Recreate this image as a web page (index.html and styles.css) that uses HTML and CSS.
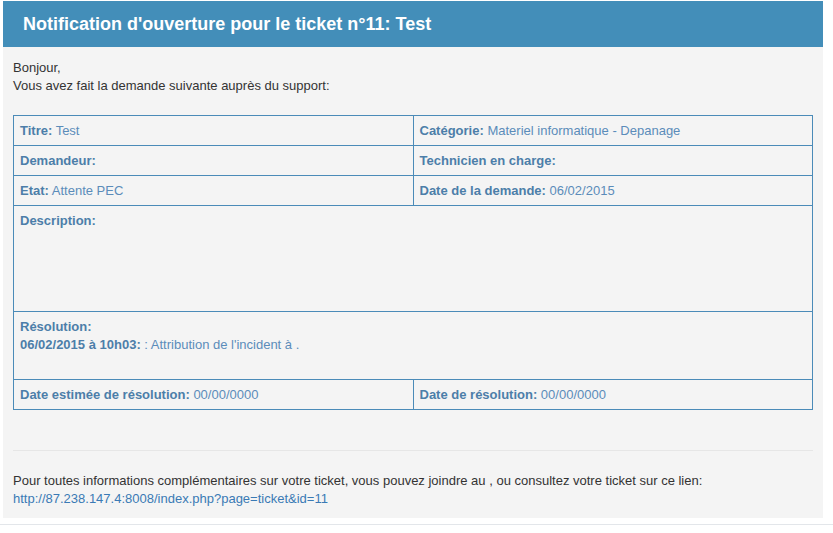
FILE: index.html
```html
<!DOCTYPE html>
<html lang="fr">
<head>
    <meta charset="UTF-8">
    <title>Notification d'ouverture pour le ticket n°11</title>
    <link rel="stylesheet" href="styles.css">
</head>
<body>
    <div class="mail">
        <div class="mail-head">Notification d'ouverture pour le ticket n°11: Test</div>
        <div class="mail-body">
            <p class="intro">Bonjour,<br>Vous avez fait la demande suivante auprès du support:</p>
            <table class="ticket">
                <tr>
                    <td><b>Titre:</b> Test</td>
                    <td><b>Catégorie:</b> Materiel informatique - Depanage</td>
                </tr>
                <tr>
                    <td><b>Demandeur:</b></td>
                    <td><b>Technicien en charge:</b></td>
                </tr>
                <tr>
                    <td><b>Etat:</b> Attente PEC</td>
                    <td><b>Date de la demande:</b> 06/02/2015</td>
                </tr>
                <tr>
                    <td colspan="2" class="desc"><b>Description:</b></td>
                </tr>
                <tr>
                    <td colspan="2" class="resol"><b>Résolution:</b><br><b>06/02/2015 à 10h03:</b> : Attribution de l'incident à .</td>
                </tr>
                <tr>
                    <td><b>Date estimée de résolution:</b> 00/00/0000</td>
                    <td><b>Date de résolution:</b> 00/00/0000</td>
                </tr>
            </table>
            <hr>
            <p class="foot">Pour toutes informations complémentaires sur votre ticket, vous pouvez joindre au , ou consultez votre ticket sur ce lien:<br>
            <a href="#">http://87.238.147.4:8008/index.php?page=ticket&amp;id=11</a></p>
        </div>
    </div>
    <div class="bottom-line"></div>
</body>
</html>
```

FILE: styles.css
```css
body {
    margin: 0;
    background-color: #fff;
    font-family: "Liberation Sans", Arial, sans-serif;
    font-size: 13px;
    line-height: 18px;
    color: #333;
}
.mail {
    width: 820px;
    margin: 1px 0 0 3px;
}
.mail-head {
    background-color: #438eb9;
    color: #fff;
    height: 46px;
    line-height: 46px;
    padding-left: 20px;
    font-size: 18px;
    font-weight: bold;
}
.mail-body {
    background-color: #f4f4f4;
    padding: 12px 10px 10px 10px;
}
.intro {
    margin: 0 0 20px 0;
}
.ticket {
    width: 100%;
    border-collapse: collapse;
    table-layout: fixed;
}
.ticket td {
    border: 1px solid #4b8bb8;
    padding: 6px 6px 5px 6px;
    color: #5b8cba;
    vertical-align: top;
}
.ticket td b {
    color: #4c7ea9;
}
.ticket td.desc {
    height: 94px;
}
.ticket td.resol {
    height: 56px;
}
hr {
    border: 0;
    border-top: 1px solid #e6e6e6;
    margin: 40px 0 21px 0;
}
.foot {
    margin: 0;
}
.foot a {
    color: #3a7ab5;
    text-decoration: none;
}
.bottom-line {
    margin-top: 6px;
    border-top: 1px solid #e3e6ea;
}
```
